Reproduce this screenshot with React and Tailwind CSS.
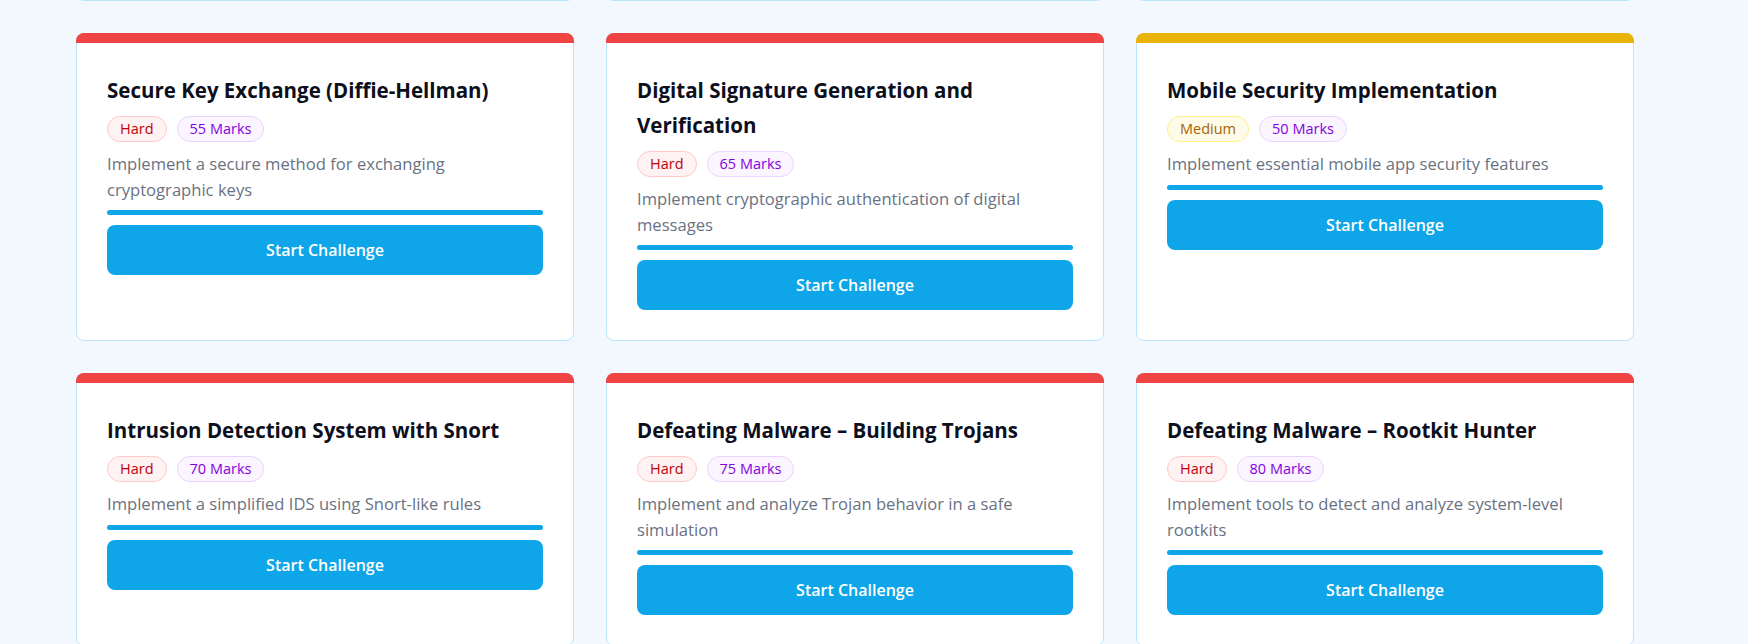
import React from 'react'

const challenges = [
    { title: 'Secure Key Exchange (Diffie-Hellman)', level: 'Hard', marks: 55, desc: 'Implement a secure method for exchanging cryptographic keys' },
    { title: 'Digital Signature Generation and Verification', level: 'Hard', marks: 65, desc: 'Implement cryptographic authentication of digital messages' },
    { title: 'Mobile Security Implementation', level: 'Medium', marks: 50, desc: 'Implement essential mobile app security features' },
    { title: 'Intrusion Detection System with Snort', level: 'Hard', marks: 70, desc: 'Implement a simplified IDS using Snort-like rules' },
    { title: 'Defeating Malware – Building Trojans', level: 'Hard', marks: 75, desc: 'Implement and analyze Trojan behavior in a safe simulation' },
    { title: 'Defeating Malware – Rootkit Hunter', level: 'Hard', marks: 80, desc: 'Implement tools to detect and analyze system-level rootkits' },
]

// colours per difficulty
const levelStyles = {
    Hard: { bar: 'bg-[#ef4444]', badge: 'bg-red-50 border-red-200 text-red-700' },
    Medium: { bar: 'bg-[#eab308]', badge: 'bg-yellow-50 border-yellow-200 text-yellow-700' },
}

function ChallengeCard({ title, level, marks, desc }) {
    const style = levelStyles[level]
    return (
        <div className="flex flex-col rounded-lg border border-sky-200 bg-white">
            <div className={`-mx-px -mt-px h-[10px] rounded-t-lg ${style.bar}`}></div>
            <div className="flex flex-col px-[30px] pt-[30px] pb-[30px]">
                <h3 className="text-[20.5px] font-bold leading-[35px] text-[#0d0f1c]">{title}</h3>
                <div className="mt-2 flex gap-2.5">
                    <span className={`rounded-full border px-3 py-0.5 text-[14.5px] font-medium leading-5 ${style.badge}`}>{level}</span>
                    <span className="rounded-full border border-purple-200 bg-purple-50 px-3 py-0.5 text-[14.5px] font-medium leading-5 text-purple-700">{marks} Marks</span>
                </div>
                <p className="mt-[9px] text-[16.6px] leading-[25.6px] text-gray-500">{desc}</p>
                <div className="mt-2 h-[5px] w-full rounded-full bg-[#0ea5e9]"></div>
                <button type="button" className="mt-2.5 h-[50px] w-full rounded-lg bg-[#0ea5e9] text-base font-semibold text-white">Start Challenge</button>
            </div>
        </div>
    )
}

export default function App() {
    return (
        <div className="min-h-screen overflow-hidden bg-[#f3f7fe] font-['Open_Sans',sans-serif]">
            <div className="ml-[76px] -mt-[39px] grid w-[1558px] grid-cols-3 gap-8">
                {/* previous row, scrolled out of view */}
                {[0, 1, 2].map((n) => (
                    <div key={n} className="h-[40px] rounded-b-lg border border-t-0 border-sky-200 bg-white"></div>
                ))}
                {challenges.map((c, ndx) => <ChallengeCard key={ndx} {...c} />)}
            </div>
        </div>
    )
}
